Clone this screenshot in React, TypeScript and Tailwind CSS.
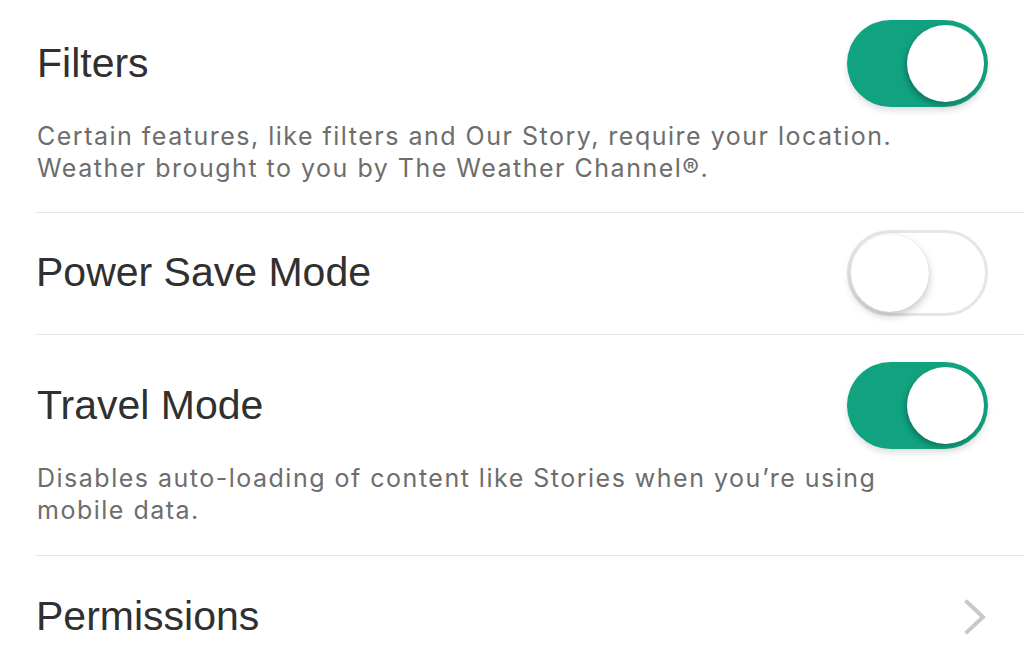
import React from "react";

function Toggle({ on }: { on: boolean }) {
  if (on) {
    return (
      <div className="relative h-[87px] w-[141px] shrink-0 rounded-full bg-[#11a280] shadow-[0_4px_6px_rgba(0,0,0,0.12)]">
        <div className="absolute right-[4px] top-[5px] h-[77px] w-[77px] rounded-full bg-white shadow-[-2px_3px_5px_rgba(0,0,0,0.25)]" />
      </div>
    );
  }
  return (
    <div className="relative h-[86px] w-[141px] shrink-0 rounded-full border-[3px] border-[#e6e6e6] bg-white">
      <div className="absolute left-[1px] top-[1px] h-[78px] w-[78px] rounded-full bg-white shadow-[0_4px_8px_rgba(0,0,0,0.22),0_0_1px_rgba(0,0,0,0.15)]" />
    </div>
  );
}

function Divider() {
  return <div className="ml-[35px] h-[1px] bg-[#e8e8e8]" />;
}

const titleCls =
  "text-[41px] leading-none text-[#303030] font-['Liberation_Sans','Helvetica_Neue',Arial,sans-serif]";
const descCls =
  "text-[25px] leading-[32px] tracking-[1.5px] text-[#6d6d6d] font-['Inter','Liberation_Sans',Arial,sans-serif]";

export default function App() {
  return (
    <div className="h-[672px] w-[1024px] overflow-hidden bg-white">
      {/* Filters */}
      <section className="pl-[37px] pr-[36px] pt-[20px] pb-[27px]">
        <div className="flex h-[87px] items-center justify-between">
          <span className={titleCls}>Filters</span>
          <Toggle on />
        </div>
        <p className={`${descCls} mt-[13px] mb-[1px] whitespace-nowrap`}>
          Certain features, like filters and Our Story, require your location.
          <br />
          Weather brought to you by The Weather Channel®.
        </p>
      </section>
      <Divider />
      {/* Power Save Mode */}
      <section className="pl-[36px] pr-[36px] pt-[16px] pb-[18px]">
        <div className="flex h-[87px] items-center justify-between">
          <span className={titleCls}>Power Save Mode</span>
          <Toggle on={false} />
        </div>
      </section>
      <Divider />
      {/* Travel Mode */}
      <section className="pl-[37px] pr-[36px] pt-[27px] pb-[29px]">
        <div className="flex h-[87px] items-center justify-between">
          <span className={titleCls}>Travel Mode</span>
          <Toggle on />
        </div>
        <p className={`${descCls} mt-[13px] whitespace-nowrap`}>
          Disables auto-loading of content like Stories when you’re using
          <br />
          mobile data.
        </p>
      </section>
      <Divider />
      {/* Permissions */}
      <section className="pl-[36px] pr-[36px] pt-[17px]">
        <div className="flex h-[87px] items-center justify-between">
          <span className={titleCls}>Permissions</span>
          <svg width="24" height="36" viewBox="0 0 24 36" fill="none">
            <path
              d="M3 3 L19 18 L3 33"
              stroke="#c7c7cc"
              strokeWidth="4"
              strokeLinecap="square"
              strokeLinejoin="miter"
            />
          </svg>
        </div>
      </section>
    </div>
  );
}
